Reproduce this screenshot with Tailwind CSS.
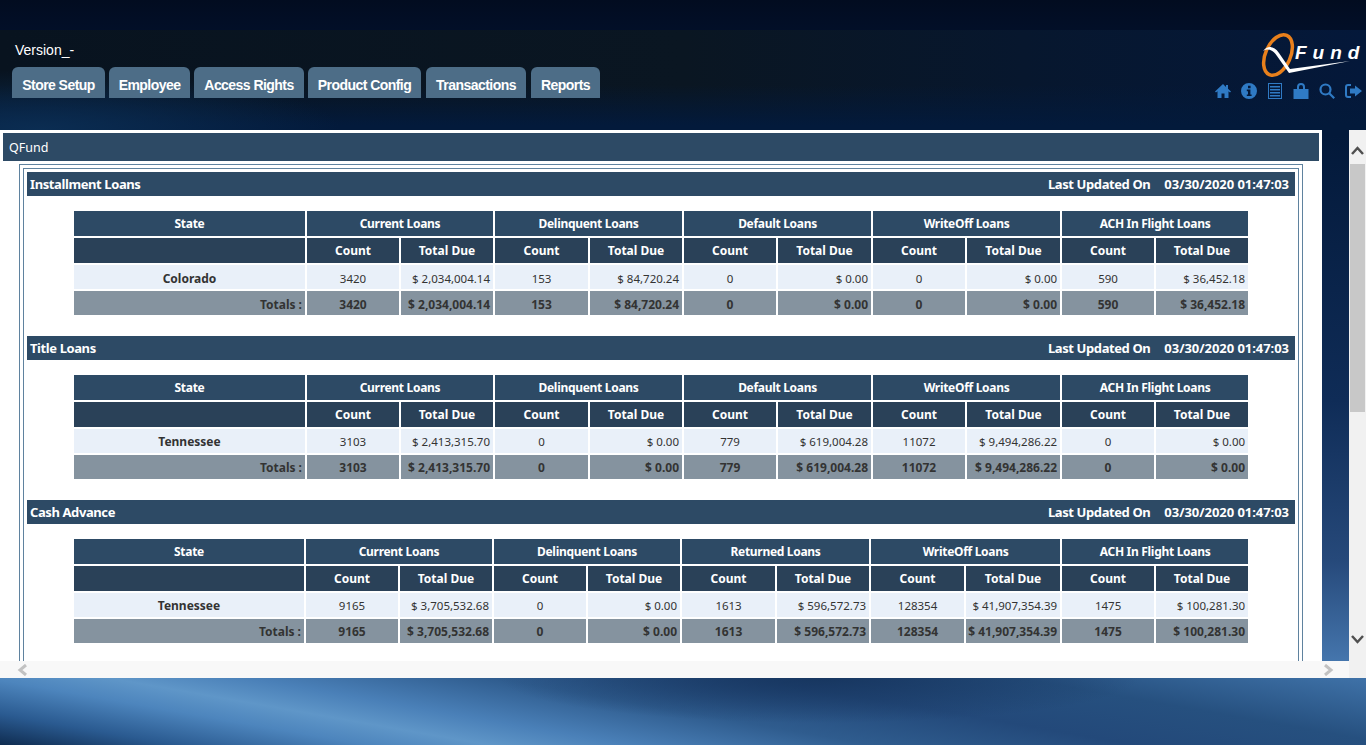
<!DOCTYPE html>
<html lang="en">
<head>
  <meta charset="UTF-8" />
  <title>QFund</title>
  <script src="https://cdn.jsdelivr.net/npm/@tailwindcss/browser@4"></script>
</head>
<body class="h-[745px] w-[1366px] overflow-hidden font-['Liberation_Sans',sans-serif] bg-[linear-gradient(180deg,#03193a_0px,#03193a_135px,#0f2c57_400px,#26497a_560px,#4a7db5_678px)]">

  <!-- top bar -->
  <header class="h-[130px] flex justify-between bg-[linear-gradient(180deg,#020c20_0px,#020f28_30px,transparent_30px),radial-gradient(ellipse_300px_60px_at_40px_130px,#0b2d52_0%,transparent_100%),linear-gradient(180deg,transparent_85px,#031a3b_125px),linear-gradient(90deg,#08131f_0%,#0a1622_50%,#04183a_100%)]">
    <div class="pl-3 pt-[42px]">
      <div class="pl-[3px] text-[14px] leading-4 text-white">Version_-</div>
      <nav class="flex gap-1 mt-[9px] h-[31px]">
        <a class="w-[93px] rounded-t-md bg-[#4d6d87] pt-[10px] text-center text-[14px] tracking-[-0.55px] leading-4 font-bold text-white">Store Setup</a>
        <a class="w-[81px] rounded-t-md bg-[#4d6d87] pt-[10px] text-center text-[14px] tracking-[-0.55px] leading-4 font-bold text-white">Employee</a>
        <a class="w-[110px] rounded-t-md bg-[#4d6d87] pt-[10px] text-center text-[14px] tracking-[-0.55px] leading-4 font-bold text-white">Access Rights</a>
        <a class="w-[113px] rounded-t-md bg-[#4d6d87] pt-[10px] text-center text-[14px] tracking-[-0.55px] leading-4 font-bold text-white">Product Config</a>
        <a class="w-[100px] ml-[1px] rounded-t-md bg-[#4d6d87] pt-[10px] text-center text-[14px] tracking-[-0.55px] leading-4 font-bold text-white">Transactions</a>
        <a class="w-[69px] ml-[1px] rounded-t-md bg-[#4d6d87] pt-[10px] text-center text-[14px] tracking-[-0.55px] leading-4 font-bold text-white">Reports</a>
      </nav>
    </div>
    <div class="flex flex-col items-end pr-[4px] pt-[30px]">
      <svg width="113" height="50" viewBox="0 0 113 50" class="mr-[-4px]">
        <ellipse cx="25" cy="25" rx="12.500" ry="21.500" transform="rotate(24 25 25)" fill="none" stroke="#e8801c" stroke-width="3.500" />
        <path d="M10 21 C15 15 21 16 26 23 L37 39 L97 31 L36 43 L24 26 C20 20 15 18 10 21 Z" fill="#fff" />
        <text x="42" y="29" font-family="Liberation Sans" font-size="19" font-weight="700" font-style="italic" fill="#fff" letter-spacing="6">Fund</text>
      </svg>
      <div class="flex items-center gap-[10px] mt-[3px] text-[#2f7ac4]">
        <svg width="16" height="16" viewBox="0 0 16 16" fill="currentColor"><path d="M8 1 0 8.600l1 1L2.500 8.300V15h4v-4.500h3V15h4V8.300L15 9.600l1-1-3-2.800V2h-2v1.900z"/></svg>
        <svg width="16" height="16" viewBox="0 0 16 16" fill="currentColor"><path fill-rule="evenodd" d="M8 0a8 8 0 1 1 0 16A8 8 0 0 1 8 0zM7 2.800v2.400h2.600V2.800zM5.800 6.600v1.600H7v3.200H5.800V13h4.800v-1.600H9.400V6.600z"/></svg>
        <svg width="16" height="16" viewBox="0 0 16 16" fill="currentColor"><path fill-rule="evenodd" d="M1 0h14v16H1zM2 1v14h12V1zM3 3h10v1.500H3zM3 6h10v1.500H3zM3 9h10v1.500H3zM3 12h10v1.500H3z"/></svg>
        <svg width="16" height="16" viewBox="0 0 16 16" fill="currentColor"><path fill-rule="evenodd" d="M4 6V4a4 4 0 0 1 8 0v2h3.500v10H.5V6zM6 6h4V4a2 2 0 0 0-4 0z"/></svg>
        <svg width="16" height="16" viewBox="0 0 16 16" fill="none" stroke="currentColor" stroke-width="2.200"><circle cx="6.500" cy="6.500" r="5"/><path d="m10.200 10.200 5 5"/></svg>
        <svg width="17" height="16" viewBox="0 0 17 16" fill="currentColor"><path d="M6 1H3a3 3 0 0 0-3 3v8a3 3 0 0 0 3 3h3v-2H3a1 1 0 0 1-1-1V4a1 1 0 0 1 1-1h3z"/><path d="M10 2.500 17 8l-7 5.500V10.500H5v-5h5z"/></svg>
      </div>
    </div>
  </header>

  <main class="h-[548px] flex">
    <div class="w-[1349px] flex flex-col">
      <div class="h-[531px] overflow-hidden">
        <div class="w-[1322px] bg-white pt-[3px] pl-[3px] pb-[60px] font-['Noto_Sans',sans-serif]">
          <div class="w-[1316px] h-[28px] bg-[#2d4a65] pl-[6px] pt-[1px] text-[12.5px] leading-[27px] text-white">QFund</div>

          <div class="w-[1284px] ml-[16px] mt-[3px] border border-[#5f829f] p-[3px]">
            <div class="border border-[#5f829f] px-[3px] pt-[3px] pb-[40px] w-[1276px]">

              <!-- Installment Loans -->
              <div class="flex justify-between h-[24px] bg-[#2d4a65] pl-[3px] pr-[6px] text-[13px] leading-[24px] font-bold text-white">
                <span class="tracking-[-0.4px]">Installment Loans</span>
                <span class="flex gap-[14px]"><span class="tracking-[-0.4px]">Last Updated On</span><span class="tracking-[-0.05px]">03/30/2020 01:47:03</span></span>
              </div>
              <table class="table-fixed w-[1178px] ml-[45px] mt-[13px] border-separate border-spacing-[2px] text-[12px] text-[#333]">
                <colgroup><col class="w-[231px]"><col class="w-[92px]"><col class="w-[92px]"><col class="w-[93px]"><col class="w-[92px]"><col class="w-[92px]"><col class="w-[93px]"><col class="w-[92px]"><col class="w-[93px]"><col class="w-[92px]"><col class="w-[92px]"></colgroup>
                <tr class="h-[25px] bg-[#2d4a65] text-white font-bold text-center tracking-[-0.3px]"><td>State</td><td colspan="2">Current Loans</td><td colspan="2">Delinquent Loans</td><td colspan="2">Default Loans</td><td colspan="2">WriteOff Loans</td><td colspan="2">ACH In Flight Loans</td></tr>
                <tr class="h-[25px] bg-[#2a4158] text-white font-bold text-center"><td></td><td>Count</td><td>Total Due</td><td>Count</td><td>Total Due</td><td>Count</td><td>Total Due</td><td>Count</td><td>Total Due</td><td>Count</td><td>Total Due</td></tr>
                <tr class="h-[24px] bg-[#e9f0f9] text-center text-[11.5px] [&>td]:pt-[3px]"><td class="font-bold text-[12px]">Colorado</td><td>3420</td><td class="text-right pr-[3px]">$ 2,034,004.14</td><td>153</td><td class="text-right pr-[3px]">$ 84,720.24</td><td>0</td><td class="text-right pr-[3px]">$ 0.00</td><td>0</td><td class="text-right pr-[3px]">$ 0.00</td><td>590</td><td class="text-right pr-[3px]">$ 36,452.18</td></tr>
                <tr class="h-[24px] bg-[#85939f] font-bold text-center [&>td]:pt-[3px]"><td class="text-right pr-[3px]">Totals :</td><td>3420</td><td class="text-right pr-[3px]">$ 2,034,004.14</td><td>153</td><td class="text-right pr-[3px]">$ 84,720.24</td><td>0</td><td class="text-right pr-[3px]">$ 0.00</td><td>0</td><td class="text-right pr-[3px]">$ 0.00</td><td>590</td><td class="text-right pr-[3px]">$ 36,452.18</td></tr>
              </table>

              <!-- Title Loans -->
              <div class="flex justify-between h-[24px] mt-[19px] bg-[#2d4a65] pl-[3px] pr-[6px] text-[13px] leading-[24px] font-bold text-white">
                <span class="tracking-[-0.4px]">Title Loans</span>
                <span class="flex gap-[14px]"><span class="tracking-[-0.4px]">Last Updated On</span><span class="tracking-[-0.05px]">03/30/2020 01:47:03</span></span>
              </div>
              <table class="table-fixed w-[1178px] ml-[45px] mt-[13px] border-separate border-spacing-[2px] text-[12px] text-[#333]">
                <colgroup><col class="w-[231px]"><col class="w-[92px]"><col class="w-[92px]"><col class="w-[93px]"><col class="w-[92px]"><col class="w-[92px]"><col class="w-[93px]"><col class="w-[92px]"><col class="w-[93px]"><col class="w-[92px]"><col class="w-[92px]"></colgroup>
                <tr class="h-[25px] bg-[#2d4a65] text-white font-bold text-center tracking-[-0.3px]"><td>State</td><td colspan="2">Current Loans</td><td colspan="2">Delinquent Loans</td><td colspan="2">Default Loans</td><td colspan="2">WriteOff Loans</td><td colspan="2">ACH In Flight Loans</td></tr>
                <tr class="h-[25px] bg-[#2a4158] text-white font-bold text-center"><td></td><td>Count</td><td>Total Due</td><td>Count</td><td>Total Due</td><td>Count</td><td>Total Due</td><td>Count</td><td>Total Due</td><td>Count</td><td>Total Due</td></tr>
                <tr class="h-[24px] bg-[#e9f0f9] text-center text-[11.5px] [&>td]:pt-[2px]"><td class="font-bold text-[12px]">Tennessee</td><td>3103</td><td class="text-right pr-[3px]">$ 2,413,315.70</td><td>0</td><td class="text-right pr-[3px]">$ 0.00</td><td>779</td><td class="text-right pr-[3px]">$ 619,004.28</td><td>11072</td><td class="text-right pr-[3px]">$ 9,494,286.22</td><td>0</td><td class="text-right pr-[3px]">$ 0.00</td></tr>
                <tr class="h-[24px] bg-[#85939f] font-bold text-center [&>td]:pt-[2px]"><td class="text-right pr-[3px]">Totals :</td><td>3103</td><td class="text-right pr-[3px]">$ 2,413,315.70</td><td>0</td><td class="text-right pr-[3px]">$ 0.00</td><td>779</td><td class="text-right pr-[3px]">$ 619,004.28</td><td>11072</td><td class="text-right pr-[3px]">$ 9,494,286.22</td><td>0</td><td class="text-right pr-[3px]">$ 0.00</td></tr>
              </table>

              <!-- Cash Advance -->
              <div class="flex justify-between h-[24px] mt-[19px] bg-[#2d4a65] pl-[3px] pr-[6px] text-[13px] leading-[24px] font-bold text-white">
                <span class="tracking-[-0.4px]">Cash Advance</span>
                <span class="flex gap-[14px]"><span class="tracking-[-0.4px]">Last Updated On</span><span class="tracking-[-0.05px]">03/30/2020 01:47:03</span></span>
              </div>
              <table class="table-fixed w-[1178px] ml-[45px] mt-[13px] border-separate border-spacing-[2px] text-[12px] text-[#333]">
                <colgroup><col class="w-[230px]"><col class="w-[92px]"><col class="w-[92px]"><col class="w-[92px]"><col class="w-[92px]"><col class="w-[93px]"><col class="w-[92px]"><col class="w-[93px]"><col class="w-[94px]"><col class="w-[92px]"><col class="w-[92px]"></colgroup>
                <tr class="h-[25px] bg-[#2d4a65] text-white font-bold text-center tracking-[-0.3px]"><td>State</td><td colspan="2">Current Loans</td><td colspan="2">Delinquent Loans</td><td colspan="2">Returned Loans</td><td colspan="2">WriteOff Loans</td><td colspan="2">ACH In Flight Loans</td></tr>
                <tr class="h-[25px] bg-[#2a4158] text-white font-bold text-center"><td></td><td>Count</td><td>Total Due</td><td>Count</td><td>Total Due</td><td>Count</td><td>Total Due</td><td>Count</td><td>Total Due</td><td>Count</td><td>Total Due</td></tr>
                <tr class="h-[24px] bg-[#e9f0f9] text-center text-[11.5px] [&>td]:pt-[2px]"><td class="font-bold text-[12px]">Tennessee</td><td>9165</td><td class="text-right pr-[3px]">$ 3,705,532.68</td><td>0</td><td class="text-right pr-[3px]">$ 0.00</td><td>1613</td><td class="text-right pr-[3px]">$ 596,572.73</td><td>128354</td><td class="text-right pr-[3px]">$ 41,907,354.39</td><td>1475</td><td class="text-right pr-[3px]">$ 100,281.30</td></tr>
                <tr class="h-[24px] bg-[#85939f] font-bold text-center [&>td]:pt-[2px]"><td class="text-right pr-[3px]">Totals :</td><td>9165</td><td class="text-right pr-[3px]">$ 3,705,532.68</td><td>0</td><td class="text-right pr-[3px]">$ 0.00</td><td>1613</td><td class="text-right pr-[3px]">$ 596,572.73</td><td>128354</td><td class="text-right pr-[3px]">$ 41,907,354.39</td><td>1475</td><td class="text-right pr-[3px]">$ 100,281.30</td></tr>
              </table>

            </div>
          </div>
        </div>
      </div>
      <!-- horizontal scrollbar -->
      <div class="h-[17px] bg-[#f8f8f8] flex items-center justify-between pl-[17px] pr-[15px]">
        <svg width="11" height="12" viewBox="0 0 11 12" fill="none" stroke="#c2c2c2" stroke-width="3"><path d="M9 1 3 6l6 5"/></svg>
        <svg width="11" height="12" viewBox="0 0 11 12" fill="none" stroke="#c2c2c2" stroke-width="3"><path d="m2 1 6 5-6 5"/></svg>
      </div>
    </div>
    <div class="w-[17px] bg-[#f1f1f1] flex flex-col items-center pt-[16px]">
      <svg width="13" height="9" viewBox="0 0 13 9" fill="none" stroke="#505050" stroke-width="2.500"><path d="m1 8 5.500-6L12 8"/></svg>
      <div class="w-[15px] h-[248px] mt-[9px] bg-[#c8c8c8]"></div>
      <svg width="13" height="9" viewBox="0 0 13 9" fill="none" stroke="#505050" stroke-width="2.500" class="mt-[223px]"><path d="m1 1 5.500 6L12 1"/></svg>
    </div>
  </main>

  <footer class="h-[67px] bg-[radial-gradient(ellipse_320px_45px_at_820px_0px,#173660_0%,transparent_100%),linear-gradient(10deg,#0f2c50_0%,#2a5a90_10%,#4d85bd_21%,#5f96c8_28%,#4a80b8_36%,#2f5c8e_50%,#23497a_65%,#26507f_80%,#3f72a8_100%)]"></footer>
</body>
</html>
